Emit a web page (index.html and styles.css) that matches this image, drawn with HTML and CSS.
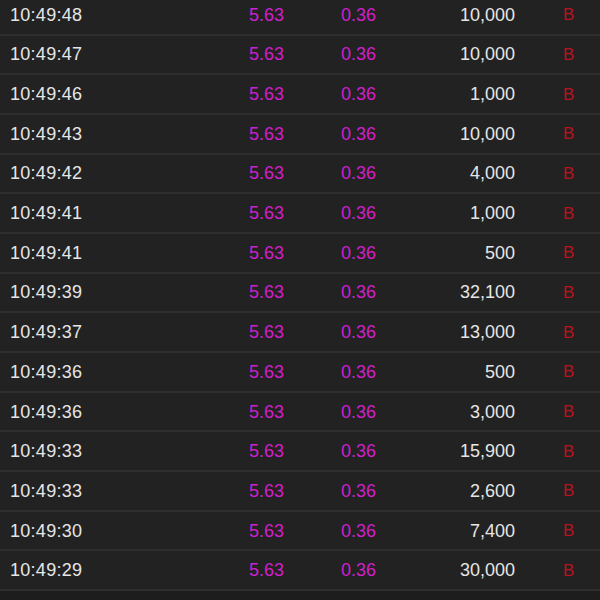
FILE: index.html
```html
<!DOCTYPE html>
<html lang="en">
<head>
<meta charset="utf-8">
<title>Trades</title>
<link rel="stylesheet" href="styles.css">
</head>
<body>
<div class="trades">
  <div class="row"><span class="time">10:49:48</span><span class="price">5.63</span><span class="chg">0.36</span><span class="vol">10,000</span><span class="side">B</span></div>
  <div class="row"><span class="time">10:49:47</span><span class="price">5.63</span><span class="chg">0.36</span><span class="vol">10,000</span><span class="side">B</span></div>
  <div class="row"><span class="time">10:49:46</span><span class="price">5.63</span><span class="chg">0.36</span><span class="vol">1,000</span><span class="side">B</span></div>
  <div class="row"><span class="time">10:49:43</span><span class="price">5.63</span><span class="chg">0.36</span><span class="vol">10,000</span><span class="side">B</span></div>
  <div class="row"><span class="time">10:49:42</span><span class="price">5.63</span><span class="chg">0.36</span><span class="vol">4,000</span><span class="side">B</span></div>
  <div class="row"><span class="time">10:49:41</span><span class="price">5.63</span><span class="chg">0.36</span><span class="vol">1,000</span><span class="side">B</span></div>
  <div class="row"><span class="time">10:49:41</span><span class="price">5.63</span><span class="chg">0.36</span><span class="vol">500</span><span class="side">B</span></div>
  <div class="row"><span class="time">10:49:39</span><span class="price">5.63</span><span class="chg">0.36</span><span class="vol">32,100</span><span class="side">B</span></div>
  <div class="row"><span class="time">10:49:37</span><span class="price">5.63</span><span class="chg">0.36</span><span class="vol">13,000</span><span class="side">B</span></div>
  <div class="row"><span class="time">10:49:36</span><span class="price">5.63</span><span class="chg">0.36</span><span class="vol">500</span><span class="side">B</span></div>
  <div class="row"><span class="time">10:49:36</span><span class="price">5.63</span><span class="chg">0.36</span><span class="vol">3,000</span><span class="side">B</span></div>
  <div class="row"><span class="time">10:49:33</span><span class="price">5.63</span><span class="chg">0.36</span><span class="vol">15,900</span><span class="side">B</span></div>
  <div class="row"><span class="time">10:49:33</span><span class="price">5.63</span><span class="chg">0.36</span><span class="vol">2,600</span><span class="side">B</span></div>
  <div class="row"><span class="time">10:49:30</span><span class="price">5.63</span><span class="chg">0.36</span><span class="vol">7,400</span><span class="side">B</span></div>
  <div class="row"><span class="time">10:49:29</span><span class="price">5.63</span><span class="chg">0.36</span><span class="vol">30,000</span><span class="side">B</span></div>
</div>
</body>
</html>
```

FILE: styles.css
```css
html, body {
  margin: 0;
  padding: 0;
  background: #1d1d1d;
  height: 100%;
  overflow: hidden;
}

.trades {
  margin-top: -4.2px;
  font-family: "Liberation Sans", Arial, sans-serif;
  font-size: 18px;
}

.row {
  display: grid;
  grid-template-columns: 239px 92px 80px 94px 1fr;
  align-items: center;
  height: 36.7px;
  padding: 1px 0 0 10px;
  background: #222222;
  border-bottom: 2px solid #2e2e2e;
  box-sizing: content-box;
}

.time {
  color: #e6e6e6;
  letter-spacing: 0.28px;
}

.price,
.chg {
  color: #cf1fcf;
}

.vol {
  color: #e6e6e6;
  text-align: right;
}

.side {
  color: #b8131f;
  padding-left: 48px;
  font-size: 17px;
}
```
